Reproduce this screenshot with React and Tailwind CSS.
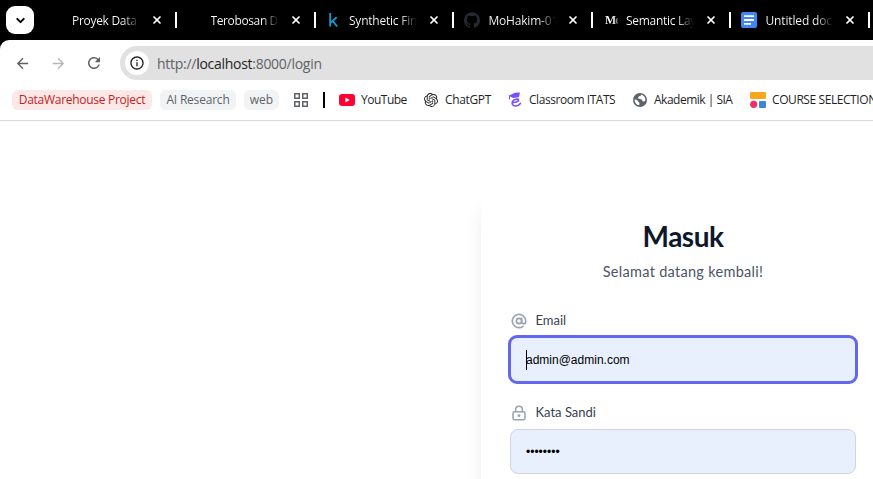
import React from "react";
import { AtSign, LockKeyhole, X, ChevronDown } from "lucide-react";
import { SiOpenai, SiGithub } from "react-icons/si";
import { MdArrowBack, MdArrowForward, MdRefresh, MdInfoOutline } from "react-icons/md";

function KaggleIcon() {
  return (
    <svg width="16" height="16" viewBox="0 0 16 16" fill="none" stroke="#1497c9" strokeWidth="1.9">
      <path d="M5.2 1v13.5M11.6 5.2L6 10.6M7.6 8.9l4.6 5.6" />
    </svg>
  );
}

function DocsIcon() {
  return (
    <svg width="16" height="16" viewBox="0 0 16 16">
      <rect width="16" height="16" rx="2" fill="#4285f4" />
      <path d="M3 4.2h10M3 8h10M3 11.8h7" stroke="#fff" strokeWidth="1.8" />
    </svg>
  );
}

function YoutubeIcon() {
  return (
    <svg width="16" height="12" viewBox="0 0 16 12">
      <rect width="16" height="12" rx="3" fill="#ff0033" />
      <path d="M6.4 3.5v5L10.6 6z" fill="#fff" />
    </svg>
  );
}

function ClassroomIcon() {
  return (
    <svg width="14" height="16" viewBox="0 0 14 16">
      <path d="M0.5 3.8L7 0.8l5-.2-1.2 4.6-5.600.8z" fill="#7c4dff" />
      <path d="M1.5 4v3.5" stroke="#7c4dff" strokeWidth="1" />
      <path
        d="M4.600 10.400c3.600.2 6.200-.9 6-2.400-.4-1.500-4.300-1-5.900 1.200-1.500 2.600.1 4.800 2.700 4.800 2 0 3.800-.8 5-2.600"
        fill="none"
        stroke="#7c4dff"
        strokeWidth="1.6"
        strokeLinecap="round"
      />
    </svg>
  );
}

function GlobeIcon() {
  return (
    <svg width="16" height="16" viewBox="0 0 16 16">
      <circle cx="8" cy="8" r="7" fill="#5f6368" />
      <path
        d="M9.3 2.5c-.2 1.300-1 1.600-2.200 1.800-.5 1.200-1.400 1.300-1.400 2.200 1.100.9 3.300.2 4.200 1.300.6.900 0 1.500 1.500 1.700l1.800-.4A5.500 5.500 0 0 0 9.300 2.500zM2.600 7.200c1.300.5 2.800.9 3.500 2 .6 1.100 1.500 1.200 1.400 2.200l-.3 1.900a5.500 5.500 0 0 1-4.600-6.100z"
        fill="#fff"
      />
    </svg>
  );
}

function CourseIcon() {
  return (
    <svg width="16" height="16" viewBox="0 0 16 16">
      <rect width="16" height="7" rx="1.2" fill="#faa61a" />
      <circle cx="3.7" cy="12.3" r="3.6" fill="#ee2f6b" />
      <rect x="9" y="9" width="7" height="7" rx="1.2" fill="#3b86d8" />
    </svg>
  );
}

function AppsIcon() {
  return (
    <svg width="14" height="14" viewBox="0 0 14 14" fill="none" stroke="#5f6368" strokeWidth="1.5">
      <rect x="0.75" y="0.75" width="4.5" height="4.5" />
      <rect x="8.75" y="0.75" width="4.5" height="4.5" />
      <rect x="0.75" y="8.75" width="4.5" height="4.5" />
      <rect x="8.75" y="8.75" width="4.5" height="4.5" />
    </svg>
  );
}

const tabs = [
  { title: "Proyek Data W", icon: null, track: "tracking-[-0.3px]" },
  { title: "Terobosan Dig", icon: null, track: "tracking-[-0.38px]" },
  { title: "Synthetic Fina", icon: <KaggleIcon />, track: "tracking-[-0.22px]" },
  { title: "MoHakim-010", icon: <SiGithub size={16} color="#24292f" />, track: "pl-px tracking-[-0.2px]" },
  {
    title: "Semantic Lay",
    icon: (
      <span className="ml-[3px] w-[13px] overflow-hidden bg-linear-to-r from-white from-60% to-[#555] bg-clip-text font-['Liberation_Serif',serif] text-[12px] font-bold tracking-[-1px] text-transparent">
        Me
      </span>
    ),
    track: "tracking-[-0.3px]",
  },
  { title: "Untitled docum", icon: <DocsIcon />, track: "pl-px tracking-[-0.15px]" },
];

function Tab({ title, icon, track }) {
  return (
    <div className="flex h-full w-[138.5px] shrink-0 items-center">
      <div className="flex w-4 shrink-0 justify-center">{icon}</div>
      <div
        className={`ml-2 w-[68px] overflow-hidden whitespace-nowrap bg-linear-to-r from-white from-75% to-transparent bg-clip-text pt-px text-[12px] text-transparent ${track}`}
      >
        {title}
      </div>
      <X className="ml-[11px] shrink-0 text-white" size={12} strokeWidth={3.4} />
      <div className="ml-[12px] h-4 w-[2px] shrink-0 bg-white" />
    </div>
  );
}

function Bookmark({ icon, label, className }) {
  return (
    <div className={`flex shrink-0 items-center ${className}`}>
      <span className="flex w-4 justify-center">{icon}</span>
      <span className="ml-[6px] whitespace-nowrap">{label}</span>
    </div>
  );
}

export default function App() {
  return (
    <div className="flex h-[479px] w-[873px] flex-col overflow-hidden bg-black font-['Open_Sans','Noto_Sans',sans-serif]">
      <div className="flex h-10 shrink-0 items-center overflow-hidden">
        <div className="ml-[6px] mr-[14px] flex h-7 w-7 shrink-0 items-center justify-center rounded-[9px] bg-white">
          <ChevronDown size={13} strokeWidth={3.6} className="text-black" />
        </div>
        {tabs.map((t) => (
          <Tab key={t.title} {...t} />
        ))}
      </div>

      <div className="flex h-[81px] shrink-0 flex-col rounded-tl-[9px] border-b border-[#dadada] bg-white">
        <div className="flex h-[46px] items-center pl-[14px]">
          <MdArrowBack size={17} className="shrink-0 text-[#5f6368]" />
          <MdArrowForward size={17} className="ml-[19px] shrink-0 text-[#b5b7b9]" />
          <MdRefresh size={18} className="ml-[18px] shrink-0 text-[#5f6368]" />
          <div className="ml-[17px] flex h-[34px] flex-1 items-center rounded-l-full bg-[#e1e1e1] pl-[5px]">
            <div className="flex h-6 w-6 items-center justify-center rounded-full bg-white">
              <MdInfoOutline size={16} className="text-[#202124]" />
            </div>
            <span className="ml-2 text-[14px] tracking-[-0.28px] text-[#606367]">
              http://<span className="text-[#1f1f1f]">localhost</span>:8000/login
            </span>
          </div>
        </div>
        <div className="flex h-[28px] items-center overflow-hidden pl-3 text-[12px] text-[#1f1f1f]">
          <div className="flex h-5 w-[140px] shrink-0 items-center justify-center whitespace-nowrap rounded-md bg-[#fce8e6] font-medium tracking-[-0.28px] text-[#c5221f]">
            DataWarehouse Project
          </div>
          <div className="ml-2 flex h-5 w-[76px] shrink-0 items-center justify-center whitespace-nowrap rounded-md bg-[#f1f3f4] font-medium tracking-[-0.2px] text-[#5f6368]">
            AI Research
          </div>
          <div className="ml-2 flex h-5 w-[35px] shrink-0 items-center justify-center rounded-md bg-[#f1f3f4] font-medium text-[#5f6368]">
            web
          </div>
          <div className="ml-[15px] shrink-0">
            <AppsIcon />
          </div>
          <div className="ml-[15px] h-4 w-[2px] shrink-0 bg-black" />
          <Bookmark className="ml-[14px] w-[84px] tracking-[-0.5px]" icon={<YoutubeIcon />} label="YouTube" />
          <Bookmark className="w-[84px] tracking-[-0.35px]" icon={<SiOpenai size={14} color="#222" />} label="ChatGPT" />
          <Bookmark className="w-[125px] tracking-[-0.45px]" icon={<ClassroomIcon />} label="Classroom ITATS" />
          <Bookmark className="w-[118px] tracking-[-0.5px]" icon={<GlobeIcon />} label="Akademik | SIA" />
          <Bookmark className="tracking-[-0.42px]" icon={<CourseIcon />} label="COURSE SELECTION" />
        </div>
      </div>

      <div className="flex flex-1 overflow-hidden bg-white pl-[481px] pt-[67px] font-[Lato,'Open_Sans',sans-serif]">
        <div className="h-[440px] w-[404px] shrink-0 rounded-xl bg-white px-[29px] pt-[30px] shadow-xl">
          <h1 className="text-center text-[28px] font-bold leading-[36px] tracking-[-0.5px] text-[#0f172a]">Masuk</h1>
          <p className="mt-[8px] text-center text-[14.5px] leading-5 tracking-[0.3px] text-[#4b5563]">
            Selamat datang kembali!
          </p>
          <div className="mt-[29px] flex h-5 items-center pl-px">
            <AtSign size={16} strokeWidth={2.5} className="text-[#9ca3af]" />
            <span className="ml-[8.5px] text-[13px] text-[#374151]">Email</span>
          </div>
          <div className="-mx-[2px] mt-[4px] flex h-[49px] items-center rounded-[9px] border-[3px] border-[#6366f1] bg-[#e8f0fe] pl-[15px]">
            <span className="h-5 w-px bg-black" />
            <span className="-ml-px font-['Liberation_Sans',Arial,sans-serif] text-[12px] text-black">
              admin@admin.com
            </span>
          </div>
          <div className="mt-[19px] flex h-5 items-center pl-px">
            <LockKeyhole size={16} strokeWidth={2.3} className="text-[#9ca3af]" />
            <span className="ml-[8.5px] text-[13px] text-[#374151]">Kata Sandi</span>
          </div>
          <div className="mt-[6px] flex h-[45px] items-center rounded-lg border border-[#d1d5db] bg-[#e8f0fe] pl-[15px]">
            <span className="font-['Liberation_Sans',Arial,sans-serif] text-[12px] text-black">••••••••</span>
          </div>
        </div>
      </div>
    </div>
  );
}
